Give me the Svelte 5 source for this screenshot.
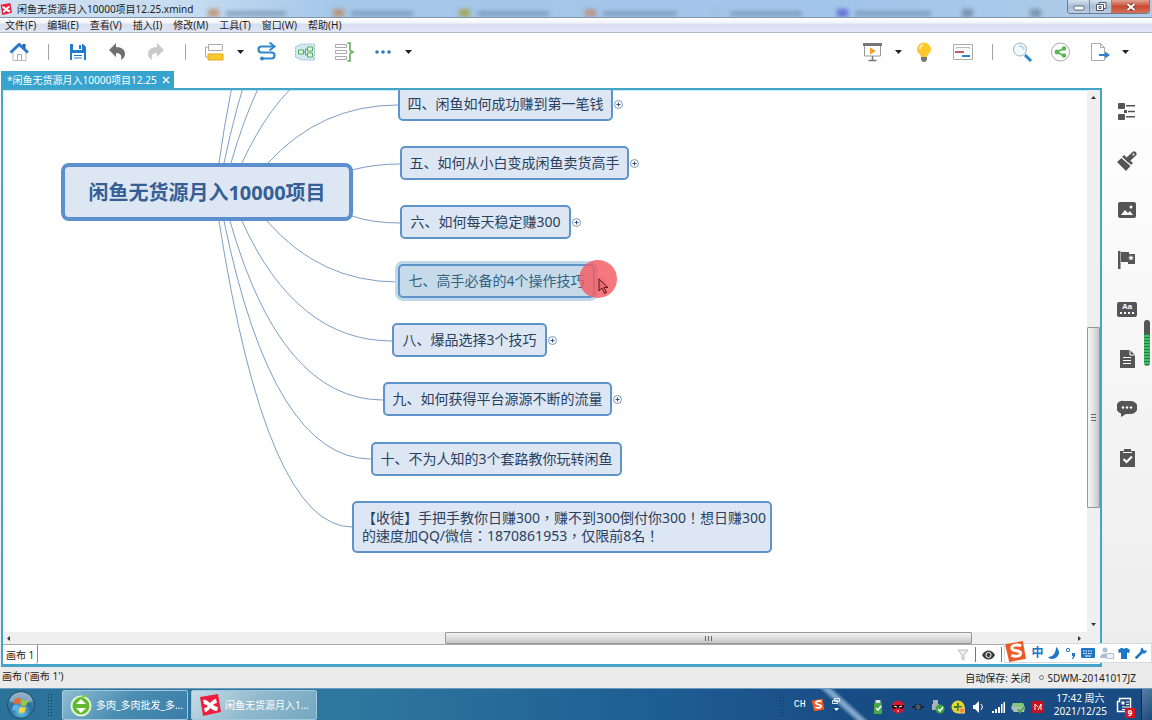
<script>
  const menus = ['文件(F)', '编辑(E)', '查看(V)', '插入(I)', '修改(M)', '工具(T)', '窗口(W)', '帮助(H)'];

  // blurred browser tabs behind the glass title bar
  const ghosts = [
    { x: 208, w: 60, color: '#c08a62' },
    { x: 333, w: 62, color: '#c08a62' },
    { x: 459, w: 72, color: '#a8a03c' },
    { x: 585, w: 74, color: '#c08a72' },
    { x: 712, w: 72, color: '#9fbfe0' },
    { x: 837, w: 76, color: '#5560d0' },
    { x: 962, w: 0, color: '#6d87a5' },
    { x: 1030, w: 0, color: '#6d87a5' }
  ];

  const topics = [
    { x: 395, y: -3, w: 215, text: '四、闲鱼如何成功赚到第一笔钱', more: true },
    { x: 397, y: 56, w: 229, text: '五、如何从小白变成闲鱼卖货高手', more: true },
    { x: 397, y: 115, w: 171, text: '六、如何每天稳定赚300', more: true },
    { x: 395, y: 174, w: 197, text: '七、高手必备的4个操作技巧', more: true, selected: true },
    { x: 389, y: 233, w: 155, text: '八、爆品选择3个技巧', more: true },
    { x: 380, y: 292, w: 229, text: '九、如何获得平台源源不断的流量', more: true },
    { x: 368, y: 352, w: 251, text: '十、不为人知的3个套路教你玩转闲鱼' },
    {
      x: 349, y: 411, w: 420,
      text: '【收徒】手把手教你日赚300，赚不到300倒付你300！想日赚300\n的速度加QQ/微信：1870861953，仅限前8名！'
    }
  ];

  // start x, start y, control x, end x, end y
  const links = [
    [216, 73, 257, 377, -220],
    [221, 73, 270, 368, -160],
    [228, 73, 278, 381, -103],
    [239, 73, 293, 389, -45],
    [265, 73, 318, 395, 15],
    [349, 80, 371, 397, 74],
    [349, 126, 369, 397, 133],
    [264, 131, 317, 395, 192],
    [239, 131, 293, 389, 251],
    [227, 131, 278, 380, 310],
    [221, 131, 270, 368, 369],
    [216, 131, 264, 349, 437]
  ];

  let selected = $state(3);
</script>

{#snippet caret()}
  <button class="caret" aria-label="更多"><svg width="7" height="4" viewBox="0 0 7 4"><path d="M0 0h7L3.500 4z" fill="#222" /></svg></button>
{/snippet}

{#snippet sogou(size)}
  <svg width={size} height={size} viewBox="0 0 22 22">
    <path d="M1 4 18 1l3 17-16 3z" fill="#ec5a24" />
    <path d="M16.500 5.500c-4-1.600-9-.6-9 2.300 0 3.400 8.500 1.500 8.500 4.900 0 3-5.500 3.600-9 1.800" fill="none" stroke="#fff" stroke-width="2.800" />
  </svg>
{/snippet}

{#snippet xmind(size)}
  <svg width={size} height={size} viewBox="0 0 22 22">
    <path d="M1 3 19 0l3 18-18 4z" fill="#ec1f3c" />
    <path d="M4 6c4-1 5 2 7 3 2-2 4-4 6-4l1 4c-2 0-3 1-4 2 2 1 3 2 5 2l-1 4c-3 0-5-2-7-3-1 2-3 4-5 4l-1-4c2 0 3-1 4-2-2-1-3-2-4-2z" fill="#fff" />
  </svg>
{/snippet}

<div class="screen">
  <header class="titlebar">
    {#each ghosts as g}
      <span class="ghost" style="left: {g.x}px; --c: {g.color}; --w: {g.w}px"></span>
    {/each}
    <span class="app-icon">{@render xmind(12)}</span>
    <h1>闲鱼无货源月入10000项目12.25.xmind</h1>
    <div class="controls">
      <button aria-label="最小化"><svg width="12" height="8" viewBox="0 0 12 8"><rect x="1" y="3" width="10" height="4" rx="1" fill="#fff" stroke="#5c6a7c" /></svg></button>
      <button aria-label="还原">
        <svg width="12" height="10" viewBox="0 0 12 10" fill="#fff" stroke="#4c5a6c"><path d="M4 .5h7v6H4z" /><path d="M1.500 2.500h7v6h-7z" /><path d="M4 4.500h2v2H4z" /></svg>
      </button>
      <button class="close" aria-label="关闭"><svg width="10" height="8" viewBox="0 0 10 8"><path d="m1.500 1 7 6m0-6-7 6" stroke="#6c2a22" stroke-width="3.600" /><path d="m1.500 1 7 6m0-6-7 6" stroke="#fff" stroke-width="2.200" /></svg></button>
    </div>
  </header>

  <nav class="menu">
    {#each menus as m}<button>{m}</button>{/each}
  </nav>

  <div class="toolbar">
    <div class="tools">
      <button class="tool" aria-label="主页">
        <svg viewBox="0 0 22 22"><path d="M5 10v9.500h13V10l-6.500-6z" fill="#fff" stroke="#bbb" /><path d="M9.500 19.500v-6h4v6" fill="none" stroke="#aaa" /><path d="M14.500 3h3v5h-3z" fill="#1d5ea8" /><path d="m2.500 11.500 8.700-8 8.700 8" fill="none" stroke="#2878ce" stroke-width="3" /></svg>
      </button>
      <i class="sep"></i>
      <button class="tool" aria-label="保存">
        <svg viewBox="0 0 22 22"><path d="M3 3h13l3 3v13H3z" fill="#1f7bd0" /><path d="M6 3h9v6H6zM5 12h12v7H5z" fill="#fff" /><path d="M12 4h2v4h-2z" fill="#1f7bd0" /><path d="M7 14.500h8M7 17h8" stroke="#1f7bd0" /></svg>
      </button>
      <button class="tool" aria-label="撤销">
        <svg viewBox="0 0 22 22"><path d="m3 9 7-7v4c6 0 9 3 9 7 0 3-2 5-4 6 1-4 0-7-5-7v4z" fill="#707070" /></svg>
      </button>
      <button class="tool" aria-label="重做">
        <svg viewBox="0 0 22 22"><path d="m19 9-7-7v4c-6 0-9 3-9 7 0 3 2 5 4 6-1-4 0-7 5-7v4z" fill="#c9c9c9" /></svg>
      </button>
      <i class="sep"></i>
      <button class="tool" aria-label="主题">
        <svg viewBox="0 0 22 22"><path d="M4.500 3.500h14v6h-14z" fill="#fff" stroke="#aaa" /><path d="M4 6H1.500v10H4" fill="none" stroke="#aaa" /><path d="M4 13h15v6H4z" fill="#f9c82c" stroke="#e0aa1c" /></svg>
      </button>
      {@render caret()}
      <button class="tool" aria-label="联系">
        <svg viewBox="0 0 22 22"><path d="M18 5.500H6.500a3 3 0 0 0 0 6h10a3 3 0 0 1 0 6H8" fill="none" stroke="#3186cc" stroke-width="2.200" /><path d="m14.500 1.500 5 4-5 4" fill="none" stroke="#3186cc" stroke-width="2" /><circle cx="7" cy="17.500" r="2" fill="#3186cc" /></svg>
      </button>
      <button class="tool" aria-label="外框">
        <svg viewBox="0 0 22 22"><path d="m1.500 6 6-3h13v16h-13l-6-3z" fill="#d2e9f5" stroke="#88b9d6" stroke-dasharray="2 1" /><path d="M4.500 9h5v4h-5zM13.500 6h5v4h-5zM13.500 12h5v4h-5z" fill="#e5f5e4" stroke="#4fb059" /><path d="M9.500 11h2M13.500 8h-2v6h2" fill="none" stroke="#4fb059" /></svg>
      </button>
      <button class="tool" aria-label="概要">
        <svg viewBox="0 0 22 22"><path d="M2.500 3.500h11v3h-11zM2.500 9.500h11v3h-11zM2.500 15.500h11v3h-11z" fill="#fff" stroke="#aaa" /><path d="M14.500 2h2.500v7.500l3 1.500-3 1.500V20h-2.500" fill="none" stroke="#5aad55" stroke-width="1.500" /></svg>
      </button>
      <button class="tool" aria-label="其他">
        <svg viewBox="0 0 22 22" fill="#2f7cbd"><circle cx="5" cy="11" r="1.800" /><circle cx="11" cy="11" r="1.800" /><circle cx="17" cy="11" r="1.800" /></svg>
      </button>
      {@render caret()}
    </div>
    <div class="tools">
      <button class="tool" aria-label="演示">
        <svg viewBox="0 0 22 22"><path d="M2.500 4h16v11h-16z" fill="#fff" stroke="#999" /><path d="M1 2h19v3H1z" fill="#777" /><path d="m8 6.500 6 3.500-6 3.500z" fill="#f5a023" /><path d="M10.500 15v4M6.500 19.500h8" stroke="#777" stroke-width="1.500" /></svg>
      </button>
      {@render caret()}
      <button class="tool" aria-label="头脑风暴">
        <svg viewBox="0 0 22 22"><path d="M11 1.500a7 7 0 0 0-7 7c0 4 4 4.500 4 7.500h6c0-3 4-3.500 4-7.500a7 7 0 0 0-7-7z" fill="#fcc92d" /><path d="M8 16h6v3l-2 2h-2l-2-2z" fill="#777" /><path d="M7 8a4 4 0 0 1 3-4" fill="none" stroke="#fff0b0" stroke-width="1.500" /></svg>
      </button>
      <button class="tool" aria-label="甘特图">
        <svg viewBox="0 0 22 22"><path d="M1.500 3.500h19v15h-19z" fill="#fff" stroke="#aaa" /><path d="M4 6.500h14M4.500 6v2M17.500 6v2" stroke="#bbb" /><path d="M3 11h9" stroke="#bd5c66" stroke-width="2" /><path d="M10 15h8" stroke="#2c7fca" stroke-width="2" /></svg>
      </button>
      <i class="sep"></i>
      <button class="tool" aria-label="搜索">
        <svg viewBox="0 0 22 22"><path d="m14 14 6 6" stroke="#2b84c8" stroke-width="3" /><circle cx="9" cy="8.500" r="6.500" fill="#f2f9fd" stroke="#9ab0bd" /><path d="M8 5a5 5 0 0 1 5 4" fill="none" stroke="#a9d4ee" stroke-width="1.500" /></svg>
      </button>
      <button class="tool" aria-label="分享">
        <svg viewBox="0 0 22 22"><circle cx="10.500" cy="11" r="9" fill="#fff" stroke="#aaa" /><path d="m14.500 7.500-8 3.500 8 4" fill="none" stroke="#5ab552" stroke-width="1.800" /><g fill="#5ab552"><circle cx="7" cy="11" r="2.400" /><circle cx="14" cy="7.500" r="2.200" /><circle cx="14" cy="14.500" r="2.200" /></g></svg>
      </button>
      <button class="tool" aria-label="导出">
        <svg viewBox="0 0 22 22"><path d="M2.500 2.500h9l4 4v13h-13z" fill="#fff" stroke="#aaa" /><path d="M11.500 2.500v4h4" fill="none" stroke="#aaa" /><path d="M10 14h8" stroke="#2d82d6" stroke-width="2" /><path d="m16 10.500 5 3.500-5 3.500z" fill="#2d82d6" /></svg>
      </button>
      {@render caret()}
    </div>
  </div>

  <div class="tabs">
    <div class="tab">
      <span>*闲鱼无货源月入10000项目12.25</span>
      <button aria-label="关闭标签"><svg width="8" height="8" viewBox="0 0 8 8"><path d="m1 1 6 6m0-6L1 7" stroke="#fff" stroke-width="1.400" /></svg></button>
    </div>
  </div>

  <div class="workspace">
    <main class="editor">
      <div class="canvas-row">
        <div class="canvas">
          <svg class="links" fill="none" stroke="#7d9fc6">
            {#each links as [sx, sy, cx, ex, ey]}
              <path d="M{sx} {sy}Q{cx} {ey} {ex} {ey}" />
            {/each}
          </svg>
          <div class="root">闲鱼无货源月入10000项目</div>
          {#each topics as t, i}
            <button
              class="topic"
              class:selected={selected === i}
              style="left: {t.x}px; top: {t.y}px; width: {t.w}px"
              onclick={() => (selected = i)}
            >{t.text}</button>
            {#if t.more}
              <span class="expand" style="left: {t.x + t.w + 1}px; top: {t.y + 13}px">
                <svg width="9" height="9" viewBox="0 0 9 9" fill="#fff" stroke="#5f7fa6"><circle cx="4.500" cy="4.500" r="4" stroke-width=".8" /><path d="M2.500 4.500h4M4.500 2.500v4" stroke="#34507a" /></svg>
              </span>
            {/if}
          {/each}
          <span class="halo"></span>
          <svg class="pointer" width="11" height="17" viewBox="0 0 11 17"><path d="M1 1v12l3-3 2.500 5.500 2-1L6 9.500h4z" fill="#e96a70" stroke="#5d1018" /></svg>
        </div>
        <div class="vscroll">
          <svg width="5" height="3" viewBox="0 0 5 3"><path d="M0 3h5L2.500 0z" fill="#333" /></svg>
          <div class="track">
            <span class="before"></span>
            <span class="thumb"><svg width="5" height="7" viewBox="0 0 5 7" stroke="#666"><path d="M0 .5h5M0 3.500h5M0 6.500h5" /></svg></span>
            <span class="after"></span>
          </div>
          <svg width="5" height="3" viewBox="0 0 5 3"><path d="M0 0h5L2.500 3z" fill="#333" /></svg>
        </div>
      </div>
      <div class="hscroll">
        <svg width="3" height="5" viewBox="0 0 3 5"><path d="M3 0v5L0 2.500z" fill="#333" /></svg>
        <div class="track">
          <span class="before"></span>
          <span class="thumb"><svg width="7" height="5" viewBox="0 0 7 5" stroke="#666"><path d="M.5 0v5M3.500 0v5M6.500 0v5" /></svg></span>
          <span class="after"></span>
        </div>
        <svg width="3" height="5" viewBox="0 0 3 5"><path d="M0 0v5l3-2.500z" fill="#333" /></svg>
      </div>
      <div class="sheets">
        <button class="sheet">画布 1</button>
        <div class="sheet-tools">
          <button aria-label="筛选"><svg width="12" height="12" viewBox="0 0 12 12"><path d="M1 1h10L7 6v5l-2-1V6z" fill="#eee" stroke="#bbb" /></svg></button>
          <i></i>
          <button aria-label="显示"><svg width="13" height="10" viewBox="0 0 13 10"><path d="M0 5c3-6 10-6 13 0-3 6-10 6-13 0z" fill="#3c3c3c" /><circle cx="6.500" cy="5" r="2.600" fill="#3c3c3c" stroke="#fff" /></svg></button>
          <i></i>
        </div>
      </div>
    </main>

    <aside class="sidebar">
      <button aria-label="大纲"><svg viewBox="0 0 20 20" fill="#555"><rect x="1" y="2" width="7" height="6" rx="1" /><rect x="1" y="13" width="7" height="6" rx="1" /><path d="M9 4h9v1.500H9zM7 9h3v3H7zM11 9.800h7v1.500h-7zM9 15h9v1.500H9z" /></svg></button>
      <button aria-label="格式"><svg viewBox="0 0 20 20"><path d="M11 8.500 17 3" stroke="#555" stroke-width="5" stroke-linecap="round" /><circle cx="16.500" cy="3.500" r="1" fill="#fff" /><path d="m7 4 9 8-2 2-9-8z" fill="#555" /><path d="m4.500 7 9 8-4.500 5-9-9z" fill="#555" /><path d="m5 6.500 9 8" stroke="#fff" /></svg></button>
      <button aria-label="图片"><svg viewBox="0 0 20 20"><rect x="1" y="2" width="18" height="16" rx="2" fill="#555" /><path d="m4 15 4-5 3 3 2-2 3 4z" fill="#fff" /><circle cx="14" cy="7" r="1.500" fill="#fff" /></svg></button>
      <button aria-label="标记"><svg viewBox="0 0 20 20"><path d="M1 1h2.500v18H1zM4 2h8v2h6v10h-7v-2H4z" fill="#555" /><path d="m14 5 .8 1.800 2 .2-1.500 1.300.5 2-1.800-1-1.800 1 .5-2L11.200 7l2-.2z" fill="#fff" /></svg></button>
      <button aria-label="风格" class="aa"><span>Aa</span></button>
      <button aria-label="备注"><svg viewBox="0 0 20 20"><path d="M3 1h10l5 5v13H3z" fill="#555" /><path d="M13 1v5h5M6 8.500h8M6 11.500h8M6 14.500h8" stroke="#fff" fill="none" /></svg></button>
      <button aria-label="批注"><svg viewBox="0 0 20 20"><path d="M7 3h7a5.500 5.500 0 0 1 0 13H9l-5 3v-3.500A6.300 6.300 0 0 1 7 3z" fill="#555" /><g fill="#fff"><circle cx="6" cy="9.500" r="1.200" /><circle cx="10" cy="9.500" r="1.200" /><circle cx="14" cy="9.500" r="1.200" /></g></svg></button>
      <button aria-label="任务"><svg viewBox="0 0 20 20"><path d="M3 3h4V1h7v2h4v16H3z" fill="#555" /><path d="M6 4.500h9" stroke="#fff" /><path d="m6.500 11 3 3 5.500-5.500" stroke="#fff" stroke-width="2" fill="none" /></svg></button>
    </aside>
    <span class="meter"></span>

    <div class="ime">
      <span class="ime-logo">{@render sogou(23)}</span>
      <button class="lang">中</button>
      <button aria-label="月亮"><svg width="12" height="12" viewBox="0 0 12 12"><path d="M8 0c6 5 2 12-4 12-2 0-3-1-4-2 5 0 8-4 8-10z" fill="#1d76c6" /></svg></button>
      <button aria-label="标点"><svg width="12" height="12" viewBox="0 0 12 12"><circle cx="3" cy="3" r="1.700" fill="none" stroke="#1d76c6" /><path d="M7 6h3v3l-2 3H7l1-3H7z" fill="#1d76c6" /></svg></button>
      <button aria-label="键盘"><svg width="14" height="12" viewBox="0 0 14 12"><rect y="1" width="14" height="10" rx="1" fill="#1d76c6" /><path d="M2 4h10M2 6.500h10" stroke="#fff" stroke-width="1.200" stroke-dasharray="1.500 1" /><path d="M4 9h6" stroke="#fff" /></svg></button>
      <button aria-label="登录"><svg width="14" height="12" viewBox="0 0 14 12" fill="#aebfd2"><circle cx="5" cy="3" r="2.500" /><path d="M0 11c0-6 8-6 10 0z" /><path d="M6.500 6.500h7v5h-7z" fill="#eef3f8" stroke="#aebfd2" /></svg></button>
      <button aria-label="皮肤"><svg width="12" height="12" viewBox="0 0 12 12"><path d="M3 1h1.500q1.500 1.500 3 0H9l3 2-1 3-2-.5V12H3V5.500L1 6 0 3z" fill="#1d76c6" /></svg></button>
      <button aria-label="工具箱"><svg width="12" height="12" viewBox="0 0 12 12"><path d="m1.500 10.500 6-6" stroke="#1d76c6" stroke-width="2.600" stroke-linecap="round" /><path d="M7.500.5 8.500 3 9.500 3.500 12 3.500a3.500 3.500 0 0 1-6 2 3.400 3.400 0 0 1 1.500-5z" fill="#1d76c6" /></svg></button>
    </div>
  </div>

  <footer class="status">
    <span>画布 ('画布 1')</span>
    <span class="right"><span>自动保存: 关闭</span><span class="dot"></span><span>SDWM-20141017JZ</span></span>
  </footer>

  <div class="taskbar">
    <span class="streak"></span>
    <button class="start" aria-label="开始">
      <svg width="30" height="30" viewBox="0 0 30 30">
        <defs>
          <radialGradient id="orb" cx=".5" cy=".75" r=".7"><stop offset="0" stop-color="#6fd0ee" /><stop offset=".55" stop-color="#2b6f9f" /><stop offset="1" stop-color="#5f89a8" /></radialGradient>
        </defs>
        <circle cx="15" cy="15" r="13.500" fill="url(#orb)" stroke="#214a66" />
        <path d="M3 11a12.500 12.500 0 0 1 24 0q-12 5-24 0z" fill="#fff" opacity=".35" />
        <path d="M9 9q3-2 6 0l-1.500 5.500q-3-2-6 0z" fill="#ec6a2c" />
        <path d="M16 9.500q3 2 6 0L20.500 15q-3 2-6 0z" fill="#9ac83c" />
        <path d="M7 15.500q3-2 6 0L11.500 21q-3-2-6 0z" fill="#5bb1ea" />
        <path d="M14 16.500q3 2 6 0L18.500 22q-3 2-6 0z" fill="#fbd241" />
      </svg>
    </button>
    <i class="grip"></i>
    <button class="task">
      <svg width="22" height="24" viewBox="0 0 22 24"><circle cx="11" cy="13" r="9.500" fill="#62b82e" stroke="#e4f5d6" stroke-width="2" /><path d="M5 4Q12 5 18 0q-1 5-8 5z" fill="#7ccb3c" /><path d="m6 11 5-5 5 5zM6 15h10l-5 5z" fill="#fff" /></svg>
      <span>多肉_多肉批发_多...</span>
    </button>
    <button class="task active">
      {@render xmind(22)}
      <span>闲鱼无货源月入1...</span>
    </button>

    <div class="tray">
      <i class="grip"></i>
      <span class="ch">CH</span>
      {@render sogou(14)}
      <svg width="8" height="16" viewBox="0 0 8 16"><path d="M2.500 1.500h5v3h-5zM.5 3.500h5v3h-5z" fill="none" stroke="#dce8f3" /><path d="M2 11h5l-2.500 3z" fill="#fff" /></svg>
      <div class="icons">
        <svg viewBox="0 0 14 14"><path d="M4.500 0h5v3h-5z" fill="#ddd" /><path d="M3 3h8v11H3z" fill="#45a845" /><path d="m5 8 2 2 3-4" stroke="#fff" fill="none" stroke-width="1.500" /></svg>
        <svg viewBox="0 0 14 14"><circle cx="7" cy="7" r="6.500" fill="#d8192c" /><path d="M1 5h12v3l-2 1-4-1-4 1-2-1z" fill="#250c12" /><path d="m3 6 3 1m5-1L8 7M6 11h2" stroke="#fff" /></svg>
        <svg viewBox="0 0 14 14"><path d="M1 7h12M5 4v6M9 4v6" stroke="#17232e" stroke-width="2" /><circle cx="7" cy="7" r="2.500" fill="#4a5864" /></svg>
        <svg viewBox="0 0 14 14"><path d="M2 0h5v4h1v6H1V4h1z" fill="#a8b3bb" /><circle cx="9" cy="9" r="4.500" fill="#39a63b" /><path d="m7 9 2 2 3-4" stroke="#fff" fill="none" stroke-width="1.500" /></svg>
        <svg viewBox="0 0 14 14"><circle cx="7" cy="7" r="6.500" fill="#e6d52e" /><path d="M7 3v8M3 7h8" stroke="#34811f" stroke-width="2" /><path d="M8 8h6v5H8z" fill="#e88f3c" stroke="#f7d492" /></svg>
        <svg viewBox="0 0 14 14"><path d="M2 5h2l4-4v12L4 9H2z" fill="#fff" /><path d="M10 4q3 3 0 6" stroke="#fff" fill="none" /></svg>
        <svg viewBox="0 0 14 14" fill="#fff"><path d="M1 11h2v2H1zM4 9h2v4H4zM7 7h2v6H7zM10 4h1.500v9H10zM12.500 2H14v11h-1.500z" /></svg>
        <svg viewBox="0 0 14 14"><path d="M2 3h10l2 5-1 4H3L0 8z" fill="#a9bfc0" /><path d="M3 3h9l1 4H2z" fill="#83c878" /><path d="m7 9 2 3 4-5" stroke="#4fa742" fill="none" stroke-width="2" /></svg>
        <svg viewBox="0 0 14 14"><rect x="1" y="1" width="12" height="12" fill="#c5101d" /><path d="M4 10V4l3 3M10 10V4L7 10" stroke="#fff" fill="none" /></svg>
      </div>
      <div class="clock"><span>17:42 周六</span><span>2021/12/25</span></div>
      <button class="news" aria-label="通知">
        <svg width="16" height="16" viewBox="0 0 16 16"><path d="M3.500 1.500h11v13h-13v-10h2z" fill="none" stroke="#fff" stroke-width="1.500" /><path d="M5.500 4.500h3v3h-3z" fill="#fff" /><path d="M10 5h3M10 7.500h3M6 10h7M6 12.500h7" stroke="#fff" /></svg>
        <b>9</b>
      </button>
      <button class="desktop" aria-label="显示桌面"></button>
    </div>
  </div>
</div>

<style>
  :global(body) { margin: 0; }

  .screen {
    display: flex;
    flex-direction: column;
    min-height: 100vh;
    overflow: hidden;
    background: #fff;
    color: #1c1c1c;
    font: 10px/14px 'Noto Sans', 'Noto Sans CJK SC', sans-serif;
  }

  .screen *, .screen *::before { box-sizing: border-box; }

  button {
    padding: 0;
    border: 0;
    background: none;
    color: inherit;
    font: inherit;
    cursor: pointer;
  }

  svg { display: block; flex: none; }

  .titlebar {
    position: relative;
    display: flex;
    align-items: center;
    height: 18px;
    overflow: hidden;
    border-bottom: 1px solid #8195ac;
    background: linear-gradient(90deg, #cfe0f1 0, #c6dcf1 190px, #a5c7e9 330px, #a2c5ea 75%, #b0cde8 100%);
  }

  .ghost {
    position: absolute;
    top: 9px;
    width: 11px;
    height: 8px;
    background: var(--c);
    filter: blur(2px);
    opacity: 0.8;
  }

  .ghost::before {
    content: '';
    position: absolute;
    left: 18px;
    top: 2px;
    width: var(--w);
    height: 5px;
    background: #7795b5;
  }

  .app-icon { position: relative; }

  h1 {
    position: relative;
    flex: 1;
    margin: 0 0 0 5px;
    font-size: 10px;
    font-weight: 400;
  }

  .controls {
    position: relative;
    display: flex;
    align-self: flex-start;
    height: 14px;
    margin-right: 2px;
    border: 1px solid #6a7b90;
    border-top: 0;
    border-radius: 0 0 4px 4px;
    overflow: hidden;
  }

  .controls button {
    display: grid;
    place-items: center;
    width: 22px;
    border-right: 1px solid #7b8da2;
    background: linear-gradient(#d5e1ee, #a9bdd3 50%, #bccee0);
  }

  .controls .close {
    width: 37px;
    border-right: 0;
    background: linear-gradient(#e0a493, #c84a33 50%, #d87058);
  }

  .menu {
    display: flex;
    gap: 11px;
    height: 15px;
    padding-left: 5px;
    border-bottom: 1px solid #b3b9ca;
    background: linear-gradient(#fff, #f1f4fa 35%, #d8dff0 45%, #dfe5f4);
  }

  .toolbar {
    display: flex;
    justify-content: space-between;
    height: 38px;
    padding: 0 29px 0 8px;
  }

  .tools {
    display: flex;
    align-items: center;
    gap: 17px;
  }

  .tool, .tool svg { width: 22px; height: 22px; }

  .caret {
    width: 7px;
    height: 20px;
    margin: 0 -6px;
  }

  .sep {
    width: 1px;
    height: 16px;
    margin: 0 1px;
    background: #a5a5a5;
  }

  .tabs {
    display: flex;
    padding-left: 1px;
  }

  .tab {
    display: flex;
    align-items: center;
    gap: 5px;
    height: 17px;
    padding: 0 4px 0 6px;
    background: #36a4cf;
    color: #fff;
  }

  .workspace {
    position: relative;
    display: flex;
    flex: 1;
    background: linear-gradient(#fff, #ececec);
  }

  .editor {
    display: flex;
    flex: 1;
    flex-direction: column;
    min-width: 0;
    margin-left: 1px;
    border: 2px solid #44a5c9;
    border-bottom-width: 3px;
    background: #fff;
  }

  .canvas-row {
    display: flex;
    flex: 1;
  }

  .canvas {
    position: relative;
    flex: 1;
    min-height: 480px;
    overflow: hidden;
    box-shadow: inset 0 1px #c4ecf8;
  }

  .links {
    position: absolute;
    width: 100%;
    height: 100%;
  }

  .root {
    position: absolute;
    left: 58px;
    top: 73px;
    width: 292px;
    height: 58px;
    border: 4px solid #5b8fd0;
    border-radius: 8px;
    background: #dde6f3;
    color: #365f96;
    font-size: 20px;
    font-weight: 700;
    line-height: 52px;
    text-align: center;
  }

  .topic {
    position: absolute;
    padding: 6px 0;
    border: 2px solid #5f93cc;
    border-radius: 5px;
    background: #dde6f3;
    color: #29415f;
    font-size: 14px;
    line-height: 18px;
    text-align: center;
    white-space: pre;
  }

  /* centred full-width punctuation in the long note */
  .topic:last-of-type {
    padding-left: 8px;
    font-family: 'Noto Sans', 'Noto Sans CJK TC', sans-serif;
    text-align: left;
  }

  .selected {
    background: #c6dae9;
    color: #35637f;
    box-shadow: 0 0 0 3px #c0d9e8;
  }

  .expand { position: absolute; }

  .halo {
    position: absolute;
    left: 576px;
    top: 170px;
    width: 38px;
    height: 38px;
    border-radius: 50%;
    background: #f35a62;
    opacity: 0.82;
  }

  .pointer {
    position: absolute;
    left: 595px;
    top: 188px;
  }

  .vscroll {
    display: flex;
    flex-direction: column;
    align-items: center;
    width: 13px;
    padding: 6px 0;
    background: #efefef;
  }

  .hscroll {
    display: flex;
    align-items: center;
    height: 13px;
    padding: 0 19px 0 4px;
    border-bottom: 1px solid #aaa;
    background: #efefef;
  }

  .track {
    display: flex;
    flex: 1;
    align-self: stretch;
  }

  .vscroll .track {
    flex-direction: column;
    margin: 4px 0;
  }

  .hscroll .track { margin: 0 6px; }

  .thumb {
    display: grid;
    place-items: center;
    border: 1px solid #979797;
    border-radius: 1px;
  }

  .vscroll .thumb { flex: 180; background: linear-gradient(90deg, #f5f5f5, #e3e3e3 50%, #c4c4c8); }
  .vscroll .before { flex: 225; }
  .vscroll .after { flex: 111; }
  .hscroll .thumb { flex: 527; background: linear-gradient(#f3f3f3, #dedede 50%, #c6c6c6); }
  .hscroll .before { flex: 430; }
  .hscroll .after { flex: 100; }

  .sheets {
    display: flex;
    justify-content: space-between;
    height: 19px;
  }

  .sheet {
    padding: 0 3px;
    border-right: 1px solid #888;
    border-radius: 0 0 3px 0;
  }

  .sheet-tools {
    display: flex;
    align-items: center;
    gap: 6px;
    margin-right: 98px;
  }

  .sheet-tools i {
    width: 1px;
    height: 15px;
    background: #777;
  }

  .sidebar {
    display: grid;
    grid-template-rows: repeat(4, 50px 49px);
    justify-content: center;
    width: 50px;
    padding-top: 13px;
  }

  .sidebar button { width: 20px; height: 20px; }
  .sidebar svg { width: 20px; height: 20px; }

  .aa span {
    display: block;
    height: 15px;
    border-radius: 2px;
    background: #555;
    color: #fff;
    font: 700 8px/10px 'Liberation Sans', sans-serif;
  }

  .aa span::after {
    content: '';
    display: block;
    margin: 0 3px;
    border-top: 2px dotted #fff;
  }

  .meter {
    position: absolute;
    right: 2px;
    top: 232px;
    width: 6px;
    height: 46px;
    border-radius: 3px;
    background: linear-gradient(#555 14px, transparent 14px), repeating-linear-gradient(#45ba68 0 2px, #2f7c48 2px 3px);
  }

  .ime {
    position: absolute;
    right: 0;
    bottom: 4px;
    display: flex;
    align-items: center;
    justify-content: space-between;
    width: 148px;
    height: 20px;
    padding-right: 4px;
    border: 1px solid #d4dbe3;
    background: #fff;
  }

  .ime-logo { margin: -4px 0 0 -1px; }

  .lang {
    color: #1d76c6;
    font-size: 12px;
    font-weight: 700;
  }

  .status {
    display: flex;
    justify-content: space-between;
    align-items: center;
    height: 21px;
    padding: 0 16px 4px 2px;
    background: #ebebeb;
  }

  .right {
    display: flex;
    align-items: center;
    padding-top: 4px;
  }

  .dot {
    width: 5px;
    height: 5px;
    margin: 0 4px 0 8px;
    border: 1px solid #777;
    border-radius: 50%;
  }

  .taskbar {
    position: relative;
    display: flex;
    align-items: center;
    height: 32px;
    padding-left: 6px;
    overflow: hidden;
    border-top: 1px solid #6a9cc0;
    background: linear-gradient(90deg, #2b7299 0, #2e78a0 30%, #1f5f93 55%, #174c84 75%, #1a4b82);
    color: #fff;
  }

  /* light beam of the wallpaper shining through the glass */
  .streak {
    position: absolute;
    right: 300px;
    top: 0;
    width: 16px;
    height: 100%;
    background: linear-gradient(90deg, transparent, #7fa5ca 40%, #7fa5ca 60%, transparent);
    transform: skewX(48deg);
  }

  .grip {
    width: 7px;
    height: 24px;
    margin: 0 8px 0 11px;
    background: radial-gradient(circle, #163c58 1px, transparent 1px) 0 0 / 3px 3px;
  }

  .task {
    display: flex;
    align-items: center;
    gap: 4px;
    width: 126px;
    height: 30px;
    margin-right: 3px;
    padding-left: 7px;
    border: 1px solid #a3c8dd;
    border-radius: 2px;
    background: linear-gradient(135deg, #8fbdd3, #4a8db2 50%, #3a7ea8);
    white-space: nowrap;
  }

  .task.active { background: linear-gradient(135deg, #c7dde6, #8fb9cd 50%, #74a8c2); }

  .tray {
    position: relative;
    display: flex;
    align-items: center;
    height: 100%;
    margin-left: auto;
  }

  .tray > svg { margin-right: 7px; }

  .ch {
    margin-right: 5px;
    font: 10px/12px 'Liberation Mono', monospace;
  }

  .icons {
    display: flex;
    gap: 6px;
    margin: 4px 9px 0 24px;
  }

  .icons svg { width: 14px; height: 14px; }

  .clock {
    display: flex;
    flex-direction: column;
    align-items: center;
    line-height: 13px;
  }

  .news {
    position: relative;
    margin: 0 6px 0 9px;
    padding-right: 3px;
  }

  .news b {
    position: absolute;
    right: 0;
    bottom: -5px;
    width: 10px;
    background: #d8141c;
    font-size: 8px;
    line-height: 10px;
  }

  .desktop {
    align-self: stretch;
    width: 11px;
    border-left: 1px solid #0e2f52;
    background: linear-gradient(135deg, #5680a8, #1e4a78);
  }
</style>
